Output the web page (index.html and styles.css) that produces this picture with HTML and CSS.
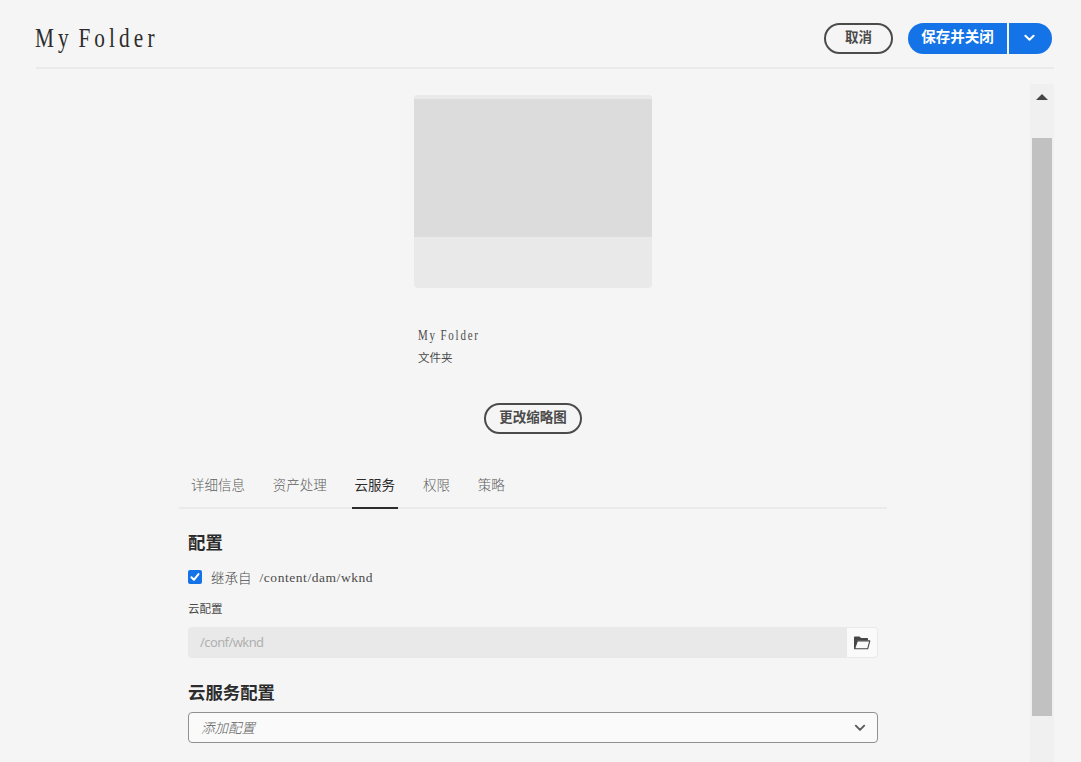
FILE: index.html
```html
<!DOCTYPE html>
<html lang="zh-CN">
<head>
<meta charset="utf-8">
<title>My Folder</title>
<link rel="stylesheet" href="styles.css">
</head>
<body>
<div class="app">
  <header class="header">
    <h1 class="title"><span class="title-text">My Folder</span></h1>
    <div class="actions">
      <button class="btn-outline cancel">取消</button>
      <div class="split">
        <button class="save">保存并关闭</button>
        <button class="more" aria-label="更多"><svg width="11" height="8" viewBox="0 0 11 8"><path d="M1.4 1.7 5.5 5.8 9.6 1.7" fill="none" stroke="#fff" stroke-width="2" stroke-linecap="round" stroke-linejoin="round"/></svg></button>
      </div>
    </div>
  </header>
  <div class="viewport">
    <main class="content">
      <section class="preview">
        <div class="card"><div class="card-image"></div></div>
        <div class="meta">
          <div class="meta-name"><span>My Folder</span></div>
          <div class="meta-type">文件夹</div>
        </div>
        <button class="btn-outline thumb">更改缩略图</button>
      </section>
      <nav class="tabs">
        <a class="tab">详细信息</a>
        <a class="tab">资产处理</a>
        <a class="tab selected">云服务</a>
        <a class="tab">权限</a>
        <a class="tab">策略</a>
      </nav>
      <section class="panel">
        <h2 class="heading">配置</h2>
        <label class="check">
          <span class="box"><svg width="14" height="14" viewBox="0 0 14 14"><path d="M3.4 7.2 5.9 9.8 10.5 4.1" fill="none" stroke="#fff" stroke-width="2" stroke-linecap="round" stroke-linejoin="round"/></svg></span>
          <span class="inherit">继承自</span><span class="path">/content/dam/wknd</span>
        </label>
        <div class="label">云配置</div>
        <div class="pathfield">
          <span class="value">/conf/wknd</span>
          <button class="browse" aria-label="浏览"><svg width="18" height="14" viewBox="0 0 18 14"><path d="M1 13V1.3Q1 .5 1.8.5H6.5L8 2H14.3Q15 2 15 2.8V4.5H4.5L1.8 13Z" fill="#464646"/><path d="M4.4 4.9H16.8L14.7 12.8H1.6Z" fill="#fafafa" stroke="#464646" stroke-width="1.1" stroke-linejoin="round"/></svg></button>
        </div>
        <h2 class="heading second">云服务配置</h2>
        <div class="select">
          <span class="placeholder">添加配置</span>
          <svg width="12" height="8" viewBox="0 0 12 8"><path d="M1.8 1.7 6 5.9 10.2 1.7" fill="none" stroke="#5a5a5a" stroke-width="1.9" stroke-linecap="round" stroke-linejoin="round"/></svg>
        </div>
      </section>
    </main>
    <div class="scrollbar">
      <svg class="arrow" width="12" height="6" viewBox="0 0 12 6"><path d="M6 0 12 6H0Z" fill="#464646"/></svg>
      <div class="thumb-bar"></div>
    </div>
  </div>
</div>
</body>
</html>
```
FILE: styles.css
```css
* { box-sizing: border-box; }
body { margin: 0; background: #f5f5f5; color: #4b4b4b; font-family: "Noto Sans CJK SC", sans-serif; overflow: hidden; }
button { font: inherit; padding: 0; margin: 0; border: 0; }
svg { display: block; flex: none; }
.app { height: 762px; padding: 0 27px 0 36px; display: flex; flex-direction: column; }
.header { height: 69px; flex: none; border-bottom: 2px solid #eaeaea; display: flex; justify-content: space-between; align-items: flex-start; }
.title { margin: 21px 0 0 -1px; font: 400 28px/34px "Liberation Serif", serif; color: #2c2c2c; white-space: nowrap; }
.title-text { display: inline-block; transform: scaleX(.76); transform-origin: left; letter-spacing: 5.4px; word-spacing: -5px; }
.actions { display: flex; gap: 15px; padding: 23px 2px 0 0; }
.btn-outline { height: 31px; border: 2px solid #4b4b4b; border-radius: 16px; background: transparent; color: #4b4b4b; font-size: 13.5px; font-weight: 700; line-height: 22px; padding-bottom: 5px; }
.cancel { width: 69px; }
.split { display: flex; gap: 2px; height: 31px; }
.save { width: 99px; margin-left: 0; background: #1473e6; color: #fff; border-radius: 16px 0 0 16px; font-size: 14.5px; font-weight: 700; line-height: 22px; padding-bottom: 5px; }
.more { width: 43px; background: #1473e6; border-radius: 0 16px 16px 0; display: flex; align-items: center; justify-content: center; padding: 0 2px 2px 0; }
.viewport { flex: 1; min-height: 0; display: flex; justify-content: space-between; }
.content { width: 708px; margin-left: 143px; padding-top: 26px; }
.preview { display: flex; flex-direction: column; align-items: center; }
.card { width: 238px; height: 193px; background: #e9e9e9; border-radius: 3px 3px 4px 4px; padding-top: 4px; }
.card-image { height: 138px; background: #dcdcdc; }
.meta { width: 230px; margin-top: 38px; }
.meta-name { font: 14px/20px "Liberation Serif", serif; white-space: nowrap; }
.meta-name span { display: inline-block; transform: scaleX(.78); transform-origin: left; letter-spacing: 2.3px; word-spacing: -1px; }
.meta-type { font-size: 11.5px; line-height: 16px; margin-top: 3px; }
.thumb { width: 98px; margin-top: 38px; }
.tabs { height: 47px; margin-top: 28px; border-bottom: 2px solid #eaeaea; display: flex; gap: 21.8px; padding-left: 9px; }
.tab { height: 47px; padding: 12px 3px 0; font-size: 13.5px; line-height: 20px; font-weight: 300; color: #5f5f5f; white-space: nowrap; }
.selected { font-weight: 400; color: #2c2c2c; border-bottom: 2px solid #2c2c2c; }
.panel { padding: 0 9px; }
.heading { margin: 20px 0 0; font-size: 17.4px; line-height: 26px; font-weight: 700; color: #2c2c2c; }
.check { display: flex; align-items: center; height: 20px; margin-top: 12px; }
.box { width: 14px; height: 14px; border-radius: 2px; background: #1473e6; }
.inherit { font-size: 13.5px; font-weight: 300; line-height: 20px; margin: 0 0 1px 9px; }
.path { font: 13.5px/20px "Liberation Serif", serif; letter-spacing: .55px; margin: 1px 0 0 8px; }
.label { font-size: 11.5px; line-height: 16px; margin-top: 13px; }
.pathfield { height: 31px; margin-top: 11px; background: #e9e9e9; border-radius: 4px; display: flex; align-items: center; justify-content: space-between; padding: 1px 1px 1px 12px; }
.value { font: 13px/20px "Noto Sans", sans-serif; color: #b0b0b0; letter-spacing: -.6px; margin-bottom: 2px; }
.browse { width: 30px; height: 29px; background: #fafafa; border-radius: 0 3px 3px 0; display: flex; align-items: center; justify-content: center; }
.second { margin-top: 21px; }
.select { height: 31px; margin-top: 7px; border: 1px solid #909090; border-radius: 4px; background: #fafafa; display: flex; align-items: center; justify-content: space-between; padding: 0 11px 0 12px; }
.placeholder { font-size: 13.5px; line-height: 20px; font-style: italic; font-weight: 300; color: #5a5a5a; margin-bottom: 2px; }
.scrollbar { width: 24px; margin-top: 15px; background: #f0f0f0; display: flex; flex-direction: column; align-items: center; }
.arrow { margin-top: 10px; }
.thumb-bar { width: 20px; height: 578px; margin-top: 38px; background: #c1c1c1; flex: none; }
```
